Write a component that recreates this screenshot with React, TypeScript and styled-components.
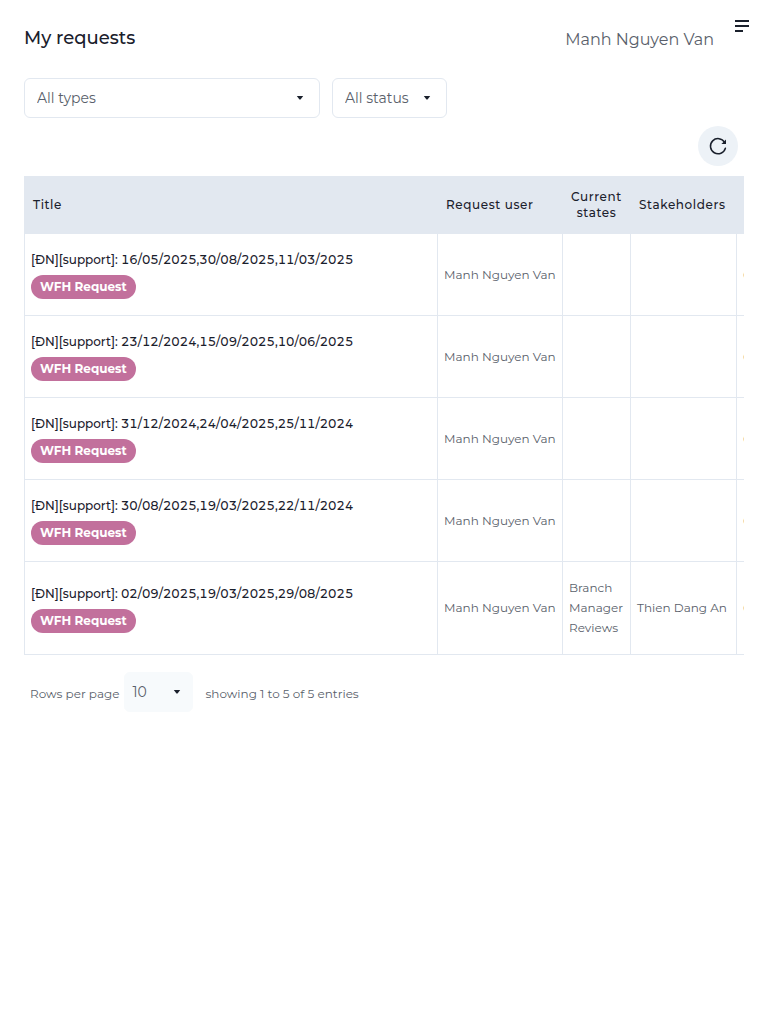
import React from "react";
import styled, { createGlobalStyle } from "styled-components";

const GlobalStyle = createGlobalStyle`
  *, *::before, *::after { box-sizing: border-box; }
  body {
    margin: 0;
    background: #ffffff;
    color: #5a5f6b;
    font-family: Montserrat, Inter, "Open Sans", sans-serif;
    font-size: 12px;
    font-weight: 400;
  }
  button, select { font: inherit; color: inherit; }
`;

const Page = styled.main`
  padding: 18px 24px 24px;
`;

const Header = styled.header`
  display: flex;
  justify-content: space-between;
  align-items: flex-start;
  height: 60px;
`;

const Heading = styled.h1`
  margin: 0;
  font-size: 18px;
  line-height: 40px;
  font-weight: 500;
  color: #1a202c;
`;

const Account = styled.div`
  display: flex;
  align-items: flex-start;
  gap: 16px;
  font-size: 16px;
  line-height: 44px;
`;

const MenuButton = styled.button`
  display: grid;
  place-items: center;
  width: 24px;
  height: 16px;
  margin-right: -10px;
  padding: 0;
  border: 0;
  background: none;
`;

const Filters = styled.div`
  display: flex;
  gap: 12px;
`;

const SelectBox = styled.div<{ $width: number; $soft?: boolean }>`
  position: relative;
  width: ${(p) => p.$width}px;
  height: 40px;

  select {
    appearance: none;
    width: 100%;
    height: 100%;
    padding: 0 ${(p) => (p.$soft ? 7 : 12)}px;
    border: 1px solid ${(p) => (p.$soft ? "#f7fafc" : "#e2e8f0")};
    border-radius: 6px;
    background: ${(p) => (p.$soft ? "#f7fafc" : "#ffffff")};
    font-size: 14px;
  }

  svg {
    position: absolute;
    top: 18px;
    right: ${(p) => (p.$soft ? 12 : 16)}px;
    pointer-events: none;
  }
`;

const Toolbar = styled.div`
  display: flex;
  justify-content: flex-end;
  padding: 8px 6px 10px;
`;

const RefreshButton = styled.button`
  display: grid;
  place-items: center;
  width: 40px;
  height: 40px;
  padding: 0;
  border: 0;
  border-radius: 50%;
  background: #edf2f7;
`;

const TableScroll = styled.div`
  overflow-x: auto;
  scrollbar-width: none;
`;

const Table = styled.table`
  width: 100%;
  min-width: 900px;
  table-layout: fixed;
  border-collapse: separate;
  border-spacing: 0;
  font-variant-numeric: lining-nums tabular-nums;
`;

const HeadCell = styled.th<{ $width?: number; $center?: boolean }>`
  width: ${(p) => (p.$width ? `${p.$width}px` : "auto")};
  height: 58px;
  padding: 0 8px;
  border-right: 1px solid #e2e8f0;
  background: #e2e8f0;
  color: #1a202c;
  font-weight: 500;
  line-height: 16px;
  letter-spacing: 0.05em;
  text-align: ${(p) => (p.$center ? "center" : "left")};

  &:first-child { border-left: 1px solid #e2e8f0; }
`;

const Cell = styled.td`
  padding: 16px 6px;
  border-right: 1px solid #e2e8f0;
  border-bottom: 1px solid #e2e8f0;
  line-height: 20px;
  vertical-align: middle;

  &:first-child { border-left: 1px solid #e2e8f0; }
`;

const RequestTitle = styled.div`
  color: #1a202c;
  font-weight: 500;
  line-height: 19px;
`;

const Badge = styled.div`
  width: fit-content;
  margin-top: 6px;
  padding: 0 9px;
  border-radius: 12px;
  background: #c2709c;
  color: #ffffff;
  font-weight: 700;
  line-height: 24px;
`;

const Footer = styled.footer`
  display: flex;
  align-items: center;
  padding: 17px 6px;
  line-height: 20px;
`;

const RowsLabel = styled.label`
  padding: 3px 5px 0 0;
`;

const Summary = styled.span`
  padding: 3px 0 0 12px;
`;

const Caret = () => (
  <svg width="8" height="4" viewBox="0 0 8 4" aria-hidden="true">
    <path d="M.8 0h6.4L4.7 3.3a.9.9 0 0 1-1.4 0z" fill="#1a202c" />
  </svg>
);

const requests = [
  { dates: "16/05/2025,30/08/2025,11/03/2025", state: "", stakeholder: "" },
  { dates: "23/12/2024,15/09/2025,10/06/2025", state: "", stakeholder: "" },
  { dates: "31/12/2024,24/04/2025,25/11/2024", state: "", stakeholder: "" },
  { dates: "30/08/2025,19/03/2025,22/11/2024", state: "", stakeholder: "" },
  { dates: "02/09/2025,19/03/2025,29/08/2025", state: "Branch Manager Reviews", stakeholder: "Thien Dang An" },
];

export default function App() {
  return (
    <>
      <GlobalStyle />
      <Page>
        <Header>
          <Heading>My requests</Heading>
          <Account>
            <span>Manh Nguyen Van</span>
            <MenuButton aria-label="Menu">
              <svg width="14" height="12" viewBox="0 0 14 12" aria-hidden="true">
                <path d="M0 1h14M0 6h14M0 11h8" stroke="#1a202c" strokeWidth="2" />
              </svg>
            </MenuButton>
          </Account>
        </Header>
        <Filters>
          <SelectBox $width={296}>
            <select aria-label="Request type"><option>All types</option></select>
            <Caret />
          </SelectBox>
          <SelectBox $width={115}>
            <select aria-label="Request status"><option>All status</option></select>
            <Caret />
          </SelectBox>
        </Filters>
        <Toolbar>
          <RefreshButton aria-label="Refresh">
            <svg width="20" height="20" viewBox="0 0 20 20" fill="none" stroke="#1a202c" strokeWidth="1.5" aria-hidden="true">
              <path d="M17.4 12.2A7.6 7.6 0 1 1 16.6 6.3" strokeLinecap="round" />
              <path d="M18 3.4v4.6h-4.6z" fill="#1a202c" stroke="none" />
            </svg>
          </RefreshButton>
        </Toolbar>
        <TableScroll>
          <Table>
            <thead>
              <tr>
                <HeadCell $width={414}>Title</HeadCell>
                <HeadCell $width={125}>Request user</HeadCell>
                <HeadCell $width={68} $center>Current states</HeadCell>
                <HeadCell $width={106}>Stakeholders</HeadCell>
                <HeadCell />
              </tr>
            </thead>
            <tbody>
              {requests.map((r) => (
                <tr key={r.dates}>
                  <Cell>
                    <RequestTitle>[ĐN][support]: {r.dates}</RequestTitle>
                    <Badge>WFH Request</Badge>
                  </Cell>
                  <Cell>Manh Nguyen Van</Cell>
                  <Cell>{r.state}</Cell>
                  <Cell>{r.stakeholder}</Cell>
                  <Cell>0</Cell>
                </tr>
              ))}
            </tbody>
          </Table>
        </TableScroll>
        <Footer>
          <RowsLabel htmlFor="rows">Rows per page</RowsLabel>
          <SelectBox $width={69} $soft>
            <select id="rows"><option>10</option></select>
            <Caret />
          </SelectBox>
          <Summary>showing 1 to 5 of 5 entries</Summary>
        </Footer>
      </Page>
    </>
  );
}
